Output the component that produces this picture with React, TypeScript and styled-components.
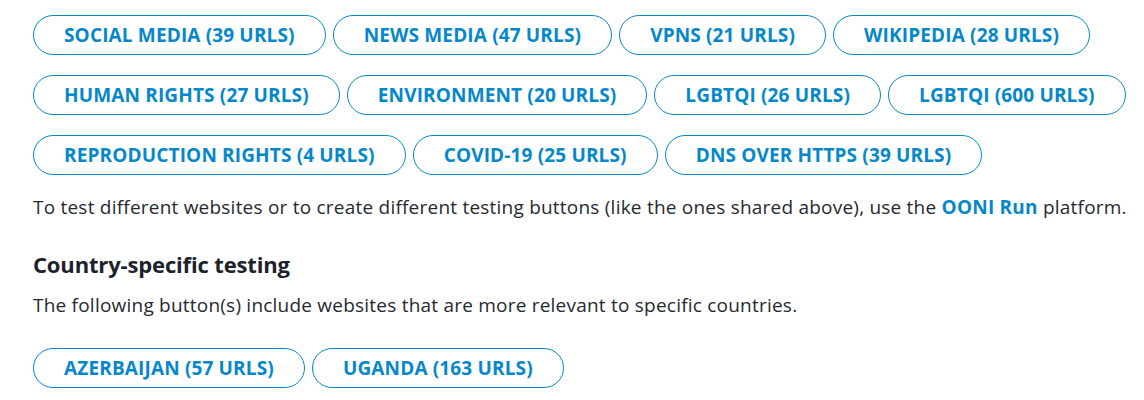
import styled, { createGlobalStyle } from 'styled-components';

const GlobalStyle = createGlobalStyle`
  html, body {
    margin: 0;
    padding: 0;
    background: #ffffff;
  }
  body {
    font-family: "Open Sans", "Noto Sans", sans-serif;
    color: #262a30;
  }
`;

const Page = styled.div`
  padding: 15px 33px 0 33px;
`;

const ButtonGroup = styled.div<{ $top?: number }>`
  display: flex;
  flex-direction: column;
  gap: 20px;
  margin-top: ${({ $top = 0 }) => $top}px;
`;

const ButtonRow = styled.div`
  display: flex;
  gap: 7px;
`;

const RunButton = styled.a`
  display: inline-flex;
  align-items: center;
  justify-content: center;
  height: 40px;
  box-sizing: border-box;
  padding: 0 30px;
  border: 1px solid #0588cb;
  border-radius: 20px;
  color: #0588cb;
  font-size: 19px;
  letter-spacing: 0.15px;
  font-weight: 700;
  text-transform: uppercase;
  text-decoration: none;
  white-space: nowrap;
  cursor: pointer;
`;

const Paragraph = styled.p<{ $top: number }>`
  margin: ${({ $top }) => $top}px 0 0 0;
  font-size: 19px;
  letter-spacing: 0.22px;
  line-height: 26px;
  white-space: nowrap;
`;

const Link = styled.a`
  color: #0588cb;
  font-weight: 700;
  text-decoration: none;
`;

const Heading = styled.h3`
  margin: 30px 0 0 0;
  font-size: 22px;
  line-height: 28px;
  letter-spacing: -0.15px;
  font-weight: 700;
  color: #1c222b;
`;

const globalRows = [
  ['Social Media (39 URLs)', 'News Media (47 URLs)', 'VPNs (21 URLs)', 'Wikipedia (28 URLs)'],
  ['Human Rights (27 URLs)', 'Environment (20 URLs)', 'LGBTQI (26 URLs)', 'LGBTQI (600 URLs)'],
  ['Reproduction Rights (4 URLs)', 'COVID-19 (25 URLs)', 'DNS over HTTPS (39 URLs)'],
];

const countryButtons = ['Azerbaijan (57 URLs)', 'Uganda (163 URLs)'];

const App = () => {
  return (
    <>
      <GlobalStyle />
      <Page>
        <ButtonGroup>
          {globalRows.map((row, i) => (
            <ButtonRow key={i}>
              {row.map((label) => (
                <RunButton key={label}>{label}</RunButton>
              ))}
            </ButtonRow>
          ))}
        </ButtonGroup>
        <Paragraph $top={19}>
          To test different websites or to create different testing buttons (like the ones shared above), use the{' '}
          <Link>OONI Run</Link> platform.
        </Paragraph>
        <Heading>Country-specific testing</Heading>
        <Paragraph $top={14}>
          The following button(s) include websites that are more relevant to specific countries.
        </Paragraph>
        <ButtonGroup $top={30}>
          <ButtonRow>
            {countryButtons.map((label) => (
              <RunButton key={label}>{label}</RunButton>
            ))}
          </ButtonRow>
        </ButtonGroup>
      </Page>
    </>
  );
};

export default App;
